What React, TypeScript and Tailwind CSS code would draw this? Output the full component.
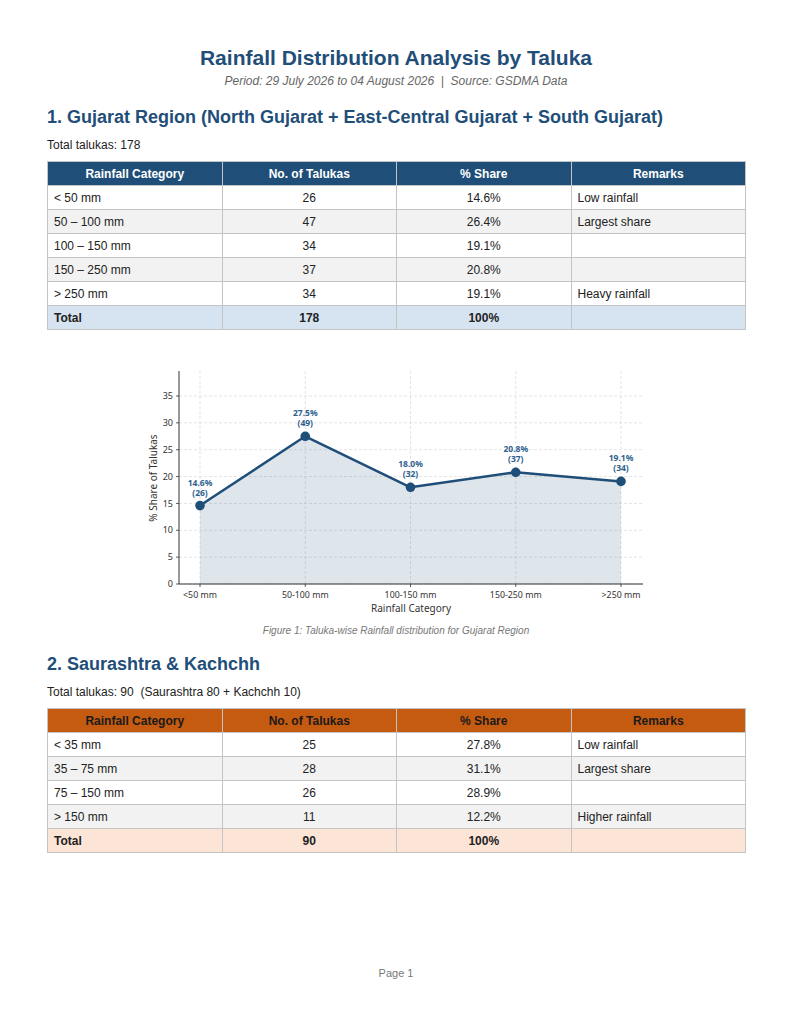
import React from "react";

type Row = { cat: string; n: string; share: string; remark: string };

const t1: Row[] = [
  { cat: "< 50 mm", n: "26", share: "14.6%", remark: "Low rainfall" },
  { cat: "50 – 100 mm", n: "47", share: "26.4%", remark: "Largest share" },
  { cat: "100 – 150 mm", n: "34", share: "19.1%", remark: "" },
  { cat: "150 – 250 mm", n: "37", share: "20.8%", remark: "" },
  { cat: "> 250 mm", n: "34", share: "19.1%", remark: "Heavy rainfall" },
];
const t2: Row[] = [
  { cat: "< 35 mm", n: "25", share: "27.8%", remark: "Low rainfall" },
  { cat: "35 – 75 mm", n: "28", share: "31.1%", remark: "Largest share" },
  { cat: "75 – 150 mm", n: "26", share: "28.9%", remark: "" },
  { cat: "> 150 mm", n: "11", share: "12.2%", remark: "Higher rainfall" },
];

function DataTable({ rows, total, headClass, totalClass }: { rows: Row[]; total: string; headClass: string; totalClass: string }) {
  const cell = "border border-[#c4c4c4] h-[24px] px-[6px] py-0 text-[12px] leading-[14px] text-[#222]";
  return (
    <table className="w-[699px] border-collapse table-fixed">
      <thead>
        <tr className={headClass}>
          {["Rainfall Category", "No. of Talukas", "% Share", "Remarks"].map((h) => (
            <th key={h} className="border border-[#c4c4c4] h-[24px] px-[6px] py-0 text-[12px] leading-[14px] font-bold text-center">
              {h}
            </th>
          ))}
        </tr>
      </thead>
      <tbody>
        {rows.map((r, i) => (
          <tr key={r.cat} className={i % 2 === 1 ? "bg-[#f2f2f2]" : "bg-white"}>
            <td className={`${cell} text-left`}>{r.cat}</td>
            <td className={`${cell} text-center`}>{r.n}</td>
            <td className={`${cell} text-center`}>{r.share}</td>
            <td className={`${cell} text-left`}>{r.remark}</td>
          </tr>
        ))}
        <tr className={totalClass}>
          <td className={`${cell} text-left font-bold`}>Total</td>
          <td className={`${cell} text-center font-bold`}>{total}</td>
          <td className={`${cell} text-center font-bold`}>100%</td>
          <td className={cell}></td>
        </tr>
      </tbody>
    </table>
  );
}

function Chart() {
  const ox = 145;
  const oy = 360;
  const xs = [200, 305.25, 410.5, 515.75, 621].map((x) => x - ox);
  const yv = (v: number) => 584 - oy - v * (188 / 35);
  const vals = [14.6, 27.5, 18.0, 20.8, 19.1];
  const counts = ["(26)", "(49)", "(32)", "(37)", "(34)"];
  const cats = ["<50 mm", "50-100 mm", "100-150 mm", "150-250 mm", ">250 mm"];
  const left = 179 - ox;
  const right = 643 - ox;
  const bottom = 584 - oy;
  const top = 371 - oy;
  const pts = xs.map((x, i) => `${x},${yv(vals[i])}`).join(" ");
  const area = `${xs[0]},${bottom} ${pts} ${xs[4]},${bottom}`;
  const font = "'Noto Sans', 'DejaVu Sans', sans-serif";
  return (
    <svg width="500" height="258" viewBox="0 0 500 258" className="block">
      {[0, 5, 10, 15, 20, 25, 30, 35].map((v) => (
        <line key={v} x1={left} x2={right} y1={yv(v)} y2={yv(v)} stroke="#d9d9d9" strokeWidth="0.7" strokeDasharray="3 2" />
      ))}
      {xs.map((x) => (
        <line key={x} x1={x} x2={x} y1={top} y2={bottom} stroke="#d9d9d9" strokeWidth="0.7" strokeDasharray="3 2" />
      ))}
      <polygon points={area} fill="#1f4e79" fillOpacity="0.15" />
      <polyline points={pts} fill="none" stroke="#1f4e79" strokeWidth="2.5" strokeLinejoin="round" />
      {xs.map((x, i) => (
        <circle key={x} cx={x} cy={yv(vals[i])} r="4.8" fill="#1f4e79" />
      ))}
      {xs.map((x, i) => (
        <g key={"l" + x} fontFamily={font} fontSize="8.5" fontWeight="700" fill="#2e5f8e" textAnchor="middle">
          <text x={x} y={yv(vals[i]) - 20}>{vals[i].toFixed(1)}%</text>
          <text x={x} y={yv(vals[i]) - 10}>{counts[i]}</text>
        </g>
      ))}
      <line x1={left} x2={left} y1={top} y2={bottom} stroke="#333" strokeWidth="1" />
      <line x1={left} x2={right} y1={bottom} y2={bottom} stroke="#333" strokeWidth="1" />
      {[0, 5, 10, 15, 20, 25, 30, 35].map((v) => (
        <g key={"t" + v}>
          <line x1={left - 3} x2={left} y1={yv(v)} y2={yv(v)} stroke="#333" strokeWidth="0.8" />
          <text x={left - 6} y={yv(v) + 3.2} fontFamily={font} fontSize="9" fill="#333" textAnchor="end">
            {v}
          </text>
        </g>
      ))}
      {xs.map((x, i) => (
        <g key={"x" + x}>
          <line x1={x} x2={x} y1={bottom} y2={bottom + 3} stroke="#333" strokeWidth="0.8" />
          <text x={x} y={bottom + 14} fontFamily={font} fontSize="8.8" fill="#333" textAnchor="middle">
            {cats[i]}
          </text>
        </g>
      ))}
      <text x={(left + right) / 2} y={bottom + 28} fontFamily={font} fontSize="10" fill="#333" textAnchor="middle">
        Rainfall Category
      </text>
      <text
        x={0}
        y={0}
        transform={`translate(${157 - ox}, ${478 - oy}) rotate(-90)`}
        fontFamily={font}
        fontSize="10"
        fill="#333"
        textAnchor="middle"
      >
        % Share of Talukas
      </text>
    </svg>
  );
}

export default function App() {
  return (
    <div className="w-[792px] h-[1024px] bg-white px-[47px] flex flex-col" style={{ fontFamily: "'Liberation Sans', Arial, sans-serif" }}>
      <h1 className="mt-[46px] text-center text-[21px] leading-[24px] font-bold text-[#1f4e79]">
        Rainfall Distribution Analysis by Taluka
      </h1>
      <p className="mt-[3px] text-center text-[12px] leading-[16px] italic text-[#666]">
        Period: 29 July 2026 to 04 August 2026&nbsp; |&nbsp; Source: GSDMA Data
      </p>
      <h2 className="mt-[17px] text-[18px] leading-[22px] font-bold text-[#1f4e79]">
        1. Gujarat Region (North Gujarat + East-Central Gujarat + South Gujarat)
      </h2>
      <p className="mt-[9px] text-[12px] leading-[16px] text-[#222]">Total talukas: 178</p>
      <div className="mt-[8px]">
        <DataTable rows={t1} total="178" headClass="bg-[#1f4e79] text-white" totalClass="bg-[#d6e3f0]" />
      </div>
      <div className="mt-[30px] flex">
        <div className="w-[500px] ml-[98px]">
          <Chart />
        </div>
      </div>
      <p className="mt-[6px] text-center text-[10px] leading-[14px] italic text-[#777]">
        Figure 1: Taluka-wise Rainfall distribution for Gujarat Region
      </p>
      <h2 className="mt-[15px] text-[18px] leading-[22px] font-bold text-[#1f4e79]">2. Saurashtra &amp; Kachchh</h2>
      <p className="mt-[9px] text-[12px] leading-[16px] text-[#222] whitespace-pre">
        Total talukas: 90  (Saurashtra 80 + Kachchh 10)
      </p>
      <div className="mt-[8px]">
        <DataTable rows={t2} total="90" headClass="bg-[#c55a11] text-[#1a1a1a]" totalClass="bg-[#fce4d6]" />
      </div>
      <div className="flex-1" />
      <p className="mb-[44px] text-center text-[11px] leading-[14px] text-[#777]">Page 1</p>
    </div>
  );
}
